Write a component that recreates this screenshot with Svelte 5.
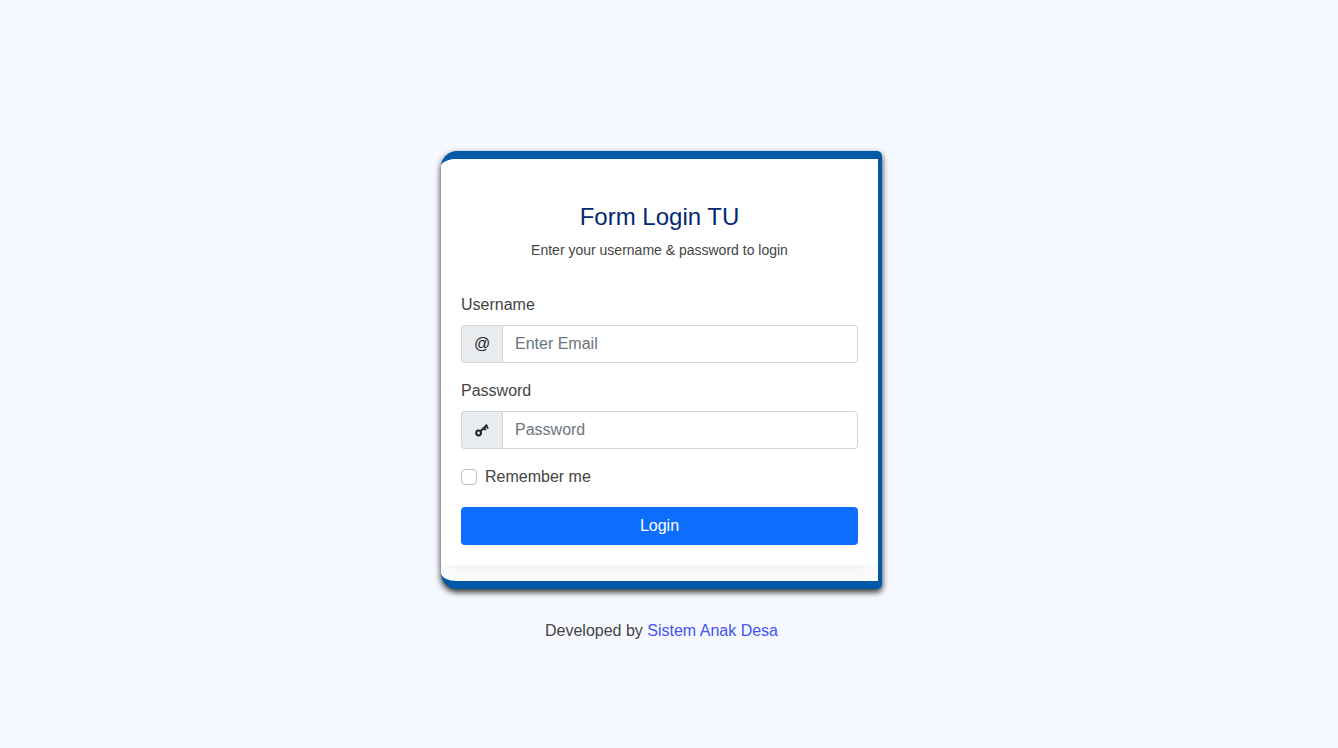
<script>
  let username = $state('');
  let password = $state('');
  let remember = $state(false);
</script>

<main>
  <section class="frame">
    <div class="card">
      <header>
        <h1>Form Login TU</h1>
        <p>Enter your username &amp; password to login</p>
      </header>
      <form onsubmit={(e) => e.preventDefault()}>
        <div class="field">
          <label for="username">Username</label>
          <div class="group">
            <span class="addon">@</span>
            <input id="username" type="text" placeholder="Enter Email" bind:value={username} />
          </div>
        </div>
        <div class="field">
          <label for="password">Password</label>
          <div class="group">
            <span class="addon">
              <svg viewBox="0 0 16 16" aria-hidden="true">
                <circle cx="4.600" cy="11" r="2.400" />
                <path d="M6.400 9.200 13.200 2.700M9.800 6l2 2.200M11.800 4.100l2.400 2.300" />
              </svg>
            </span>
            <input id="password" type="password" placeholder="Password" bind:value={password} />
          </div>
        </div>
        <div class="check">
          <input id="remember" type="checkbox" bind:checked={remember} />
          <label for="remember">Remember me</label>
        </div>
        <button type="submit">Login</button>
      </form>
    </div>
  </section>
  <footer>Developed by <a href="#desa">Sistem Anak Desa</a></footer>
</main>

<style>
  :global(body) {
    margin: 0;
    background: #f6f9ff;
    color: #444;
    font: 16px/24px "Liberation Sans", Arial, sans-serif;
  }
  main {
    box-sizing: border-box;
    min-height: 100vh;
    padding: 45px 15px 0 0;
    display: flex;
    flex-direction: column;
    align-items: center;
    justify-content: center;
    gap: 30px;
  }
  .frame {
    box-sizing: border-box;
    width: 100%;
    max-width: 441px;
    padding-bottom: 16px;
    overflow: hidden;
    background: #fff;
    border: solid #0259a7;
    border-width: 8px 4px 8px 0;
    border-radius: 16px 5px 5px 16px;
    box-shadow: 0 3px 6px rgba(0, 0, 0, 0.85);
  }
  .card {
    padding: 40px 20px 20px;
    background: #fff;
    border-radius: 5px;
    box-shadow: 0 0 30px rgba(1, 41, 112, 0.1);
  }
  header {
    text-align: center;
    margin-bottom: 32px;
  }
  h1 {
    margin: 0 0 4px;
    color: #012970;
    font-size: 24px;
    font-weight: 400;
    line-height: 36px;
  }
  p {
    margin: 0;
    font-size: 14px;
    line-height: 22px;
  }
  .field {
    margin-bottom: 16px;
  }
  .field label {
    display: block;
    margin-bottom: 8px;
  }
  .group {
    display: flex;
    height: 38px;
  }
  .addon {
    box-sizing: border-box;
    width: 41px;
    display: grid;
    place-items: center;
    color: #212529;
    background: #e9ecef;
    border: 1px solid #ced4da;
    border-right: 0;
    border-radius: 4px 0 0 4px;
  }
  svg {
    width: 16px;
    height: 16px;
    fill: none;
    stroke: #212529;
    stroke-width: 2;
  }
  .group input {
    box-sizing: border-box;
    flex: 1;
    min-width: 0;
    margin: 0;
    padding: 6px 12px;
    background: #fff;
    border: 1px solid #ced4da;
    border-radius: 0 4px 4px 0;
    color: #212529;
    font: inherit;
  }
  .group input::placeholder {
    color: #6c757d;
    opacity: 1;
  }
  .check {
    display: flex;
    align-items: center;
    gap: 8px;
    margin-bottom: 18px;
  }
  .check input {
    appearance: none;
    box-sizing: border-box;
    width: 16px;
    height: 16px;
    margin: 0;
    background: #fff;
    border: 1px solid #bfbfbf;
    border-radius: 4px;
  }
  .check input:checked {
    background: #0d6efd;
    border-color: #0d6efd;
  }
  button {
    width: 100%;
    height: 38px;
    padding: 0;
    color: #fff;
    background: #0d6efd;
    border: 0;
    border-radius: 4px;
    font: inherit;
    cursor: pointer;
  }
  a {
    color: #4154f1;
    text-decoration: none;
  }
</style>
